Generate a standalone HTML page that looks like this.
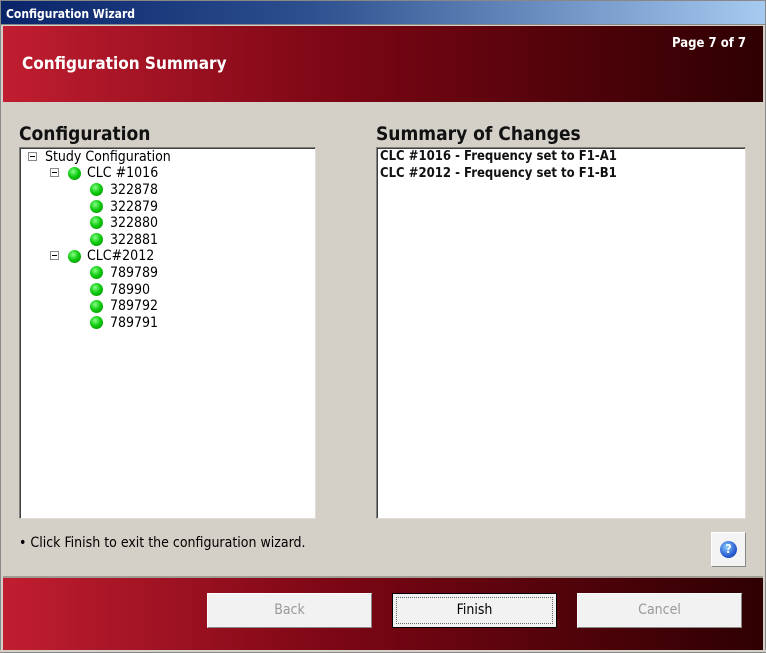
<!DOCTYPE html>
<html><head><style>
*{margin:0;padding:0;box-sizing:border-box}
body{width:766px;height:653px;overflow:hidden;background:#d4d0c8;font-family:"DejaVu Sans Condensed","Liberation Sans",sans-serif;position:relative}
.a{position:absolute}
.title{left:0;top:0;width:766px;height:25px;background:linear-gradient(90deg,#0a246a,#2c4f8e 40%,#a6caf0);border:1px solid #888;color:#fff;font-weight:bold;font-size:12px;padding:6px 0 0 5px}
.hdr{left:3px;top:26px;width:760px;height:76px;background:linear-gradient(90deg,#c01e30,#7a0614 45%,#2e0002)}
.ftr{left:3px;top:576px;width:760px;height:74px;background:linear-gradient(90deg,#c01e30,#7a0614 45%,#2e0002);border-top:2px solid #a09c94}
.box{background:#fff;border:1px solid #808080;border-right-color:#e0ddd6;border-bottom-color:#e0ddd6;box-shadow:inset 1px 1px 0 #404040}
h2{position:absolute;font-size:19px;font-weight:bold;color:#111}
.t{position:absolute;font-size:14px;color:#000;white-space:nowrap}
.s{position:absolute;font-size:13px;font-weight:bold;color:#111;white-space:nowrap}
.g{position:absolute;width:13px;height:13px;border-radius:50%;background:radial-gradient(circle at 40% 35%,#8f8,#1c1 45%,#080)}
.m{position:absolute;width:9px;height:9px;border:1px solid #888;background:#fff}
.m:after{content:"";position:absolute;left:1px;top:3px;width:5px;height:1px;background:#000}
.btn{position:absolute;top:593px;height:35px;background:#f2f2f2;border:1px solid #fff;border-right-color:#888;border-bottom-color:#888;font-size:14px;text-align:center;line-height:33px;color:#999}
</style></head><body>
<div class="a title">Configuration Wizard</div>
<div class="a" style="left:0;top:25px;width:3px;height:628px;background:#d4d0c8;border-left:1px solid #888"></div>
<div class="a hdr"></div>
<div class="a" style="left:22px;top:54px;color:#fff;font-weight:bold;font-size:17px">Configuration Summary</div>
<div class="a" style="left:672px;top:36px;color:#fff;font-size:13px;font-weight:bold">Page 7 of 7</div>

<h2 style="left:19px;top:123px">Configuration</h2>
<h2 style="left:376px;top:123px">Summary of Changes</h2>

<div class="a box" style="left:19px;top:147px;width:297px;height:372px"></div>
<div class="a box" style="left:376px;top:147px;width:370px;height:372px"></div>

<div class="m" style="left:28px;top:152px"></div><div class="t" style="left:45px;top:149px">Study Configuration</div>
<div class="m" style="left:50px;top:168px"></div><div class="g" style="left:68px;top:167px"></div><div class="t" style="left:87px;top:165px">CLC #1016</div>
<div class="g" style="left:90px;top:183px"></div><div class="t" style="left:110px;top:182px">322878</div>
<div class="g" style="left:90px;top:200px"></div><div class="t" style="left:110px;top:199px">322879</div>
<div class="g" style="left:90px;top:216px"></div><div class="t" style="left:110px;top:215px">322880</div>
<div class="g" style="left:90px;top:233px"></div><div class="t" style="left:110px;top:232px">322881</div>
<div class="m" style="left:50px;top:251px"></div><div class="g" style="left:68px;top:250px"></div><div class="t" style="left:87px;top:248px">CLC#2012</div>
<div class="g" style="left:90px;top:266px"></div><div class="t" style="left:110px;top:265px">789789</div>
<div class="g" style="left:90px;top:283px"></div><div class="t" style="left:110px;top:282px">78990</div>
<div class="g" style="left:90px;top:300px"></div><div class="t" style="left:110px;top:298px">789792</div>
<div class="g" style="left:90px;top:316px"></div><div class="t" style="left:110px;top:315px">789791</div>

<div class="s" style="left:380px;top:149px">CLC #1016 - Frequency set to F1-A1</div>
<div class="s" style="left:380px;top:166px">CLC #2012 - Frequency set to F1-B1</div>

<div class="t" style="left:19px;top:535px">• Click Finish to exit the configuration wizard.</div>
<div class="a" style="left:711px;top:532px;width:35px;height:35px;background:#f4f4f4;border:1px solid #fff;border-right-color:#888;border-bottom-color:#888">
<div style="position:absolute;left:8px;top:8px;width:17px;height:17px;border-radius:50%;background:radial-gradient(circle at 40% 35%,#8cf,#2a5cd0 60%,#123a90);color:#fff;font-weight:bold;font-size:12px;text-align:center;line-height:17px">?</div></div>

<div class="a ftr"></div>
<div class="btn" style="left:207px;width:165px">Back</div>
<div class="btn" style="left:392px;width:165px;color:#000;border:1px solid #000"><div style="position:absolute;left:3px;top:3px;right:3px;bottom:3px;border:1px dotted #666"></div>Finish</div>
<div class="btn" style="left:577px;width:165px">Cancel</div>
<div class="a" style="left:763px;top:25px;width:3px;height:628px;background:#d4d0c8;border-right:1px solid #888"></div>
<div class="a" style="left:0;top:650px;width:766px;height:3px;background:#d4d0c8;border-bottom:1px solid #888"></div>
</body></html>
